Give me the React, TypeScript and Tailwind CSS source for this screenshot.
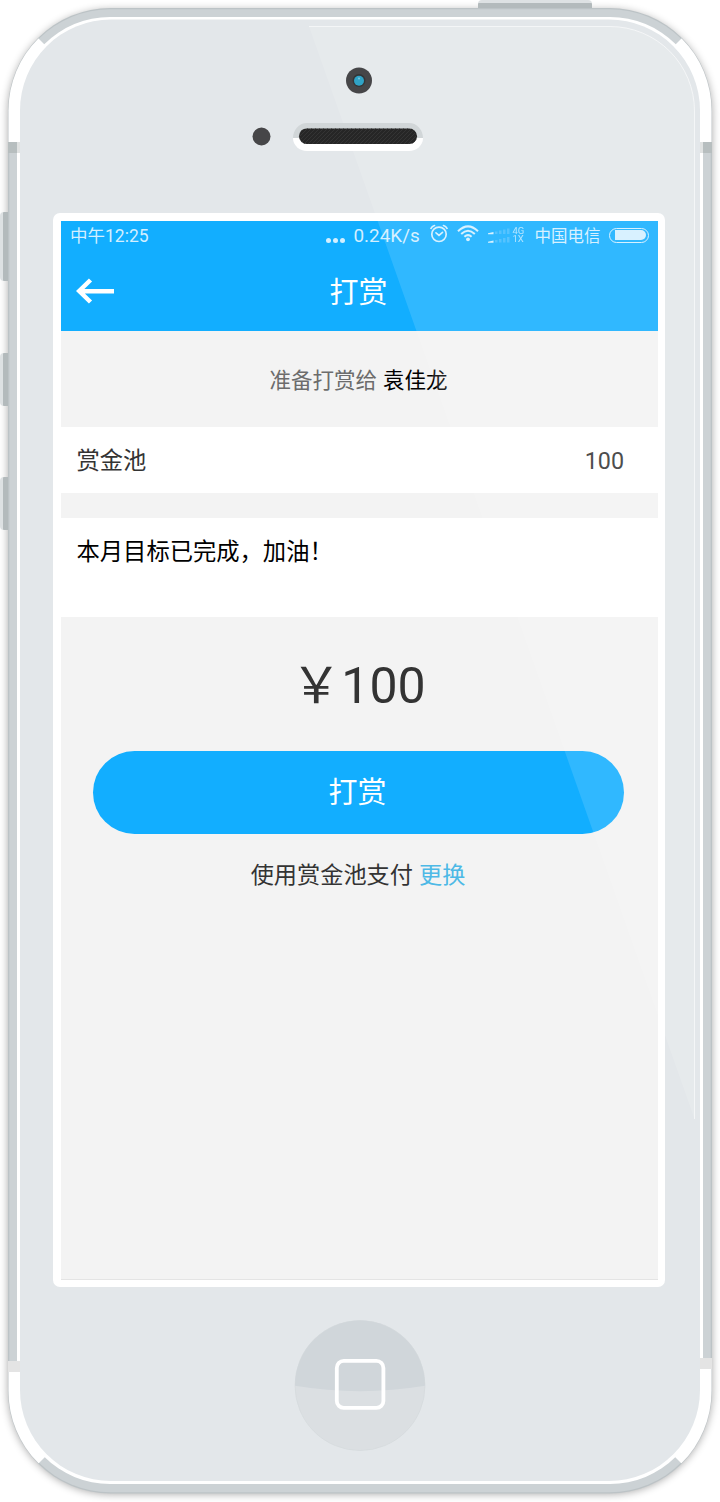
import React from 'react';

const sideButtons = [
  { y: 212, height: 69 },
  { y: 353, height: 53 },
  { y: 477, height: 53 },
];

const PhoneBody: React.FC = () => (
  <svg className="absolute inset-0" width="720" height="1502" viewBox="0 0 720 1502" aria-hidden="true">
    <defs>
      <filter id="bodyShadow" x="-5%" y="-5%" width="110%" height="110%">
        <feGaussianBlur stdDeviation="4.5" />
      </filter>
      <clipPath id="bodyClip">
        <rect x="8.5" y="8.5" width="703" height="1484.5" rx="102" />
      </clipPath>
      <clipPath id="homeClip">
        <circle cx="360" cy="1385.5" r="65" />
      </clipPath>
    </defs>

    {/* Body shadow and metal edge */}
    <rect x="8" y="10" width="704" height="1484" rx="103" fill="#000" opacity="0.34" filter="url(#bodyShadow)" />
    {sideButtons.map((b) => (
      <g key={b.y}>
        <rect x="0" y={b.y} width="10" height={b.height} rx="4" fill="#dde1e3" />
        <rect x="3" y={b.y} width="6" height={b.height} rx="1" fill="#b3babc" />
      </g>
    ))}
    <rect x="478" y="0" width="114" height="10" rx="4" fill="#dde1e3" />
    <rect x="478" y="3" width="114" height="6" rx="1" fill="#b3babc" />
    <rect x="8" y="8" width="704" height="1485.5" rx="102.5" fill="#bcc3c6" />
    <rect x="9.3" y="9.2" width="701.4" height="1483" rx="101" fill="#ccd2d5" />

    {/* Corner segments */}
    <g clipPath="url(#bodyClip)">
      <path d="M0 0L70 70V142H0ZM720 0L650 70V142H720Z" fill="#fff" />
      <path d="M0 1502L70 1432V1372H0ZM720 1502L650 1432V1369H720Z" fill="#fff" />
    </g>
    <rect x="17" y="17" width="686" height="1467" rx="93" fill="#fff" />
    <path d="M8 142H17V153H8ZM703 142H712V153H703Z" fill="#b7bebf" />
    <path d="M17 142H20V153H17ZM700 142H703V153H700Z" fill="#e0e2e2" />
    <path d="M8 1361H20V1372H8ZM700 1358H712V1369H700Z" fill="#e4e4e4" />
    <rect x="20" y="19.5" width="680" height="1461.5" rx="91" fill="#e3e7ea" />

    {/* Home button */}
    <circle cx="360" cy="1385.5" r="65" fill="#dbdfe2" stroke="#d5dadd" strokeWidth="0.8" />
    <path clipPath="url(#homeClip)" d="M290 1310H430V1385Q360 1397.5 290 1385Z" fill="#d0d6da" />
    <rect x="336.8" y="1360.9" width="46.6" height="47" rx="7" fill="none" stroke="#fff" strokeWidth="3.8" />
  </svg>
);

const Gloss: React.FC = () => (
  <svg className="pointer-events-none absolute inset-0" width="720" height="1502" viewBox="0 0 720 1502" aria-hidden="true">
    <defs>
      <pattern id="mesh" width="4" height="4" patternUnits="userSpaceOnUse">
        <path d="M0 4L4 0" stroke="#343434" strokeWidth="1" />
      </pattern>
    </defs>
    <path d="M309 26.5H610A84.5 84.5 0 0 1 694.5 111V1119Z" fill="#fff" fillOpacity="0.13" />
    <path d="M309 26.5H610A84.5 84.5 0 0 1 694.5 111V1119" fill="none" stroke="#fff" strokeOpacity="0.6" />

    {/* Camera, sensor and speaker */}
    <circle cx="359" cy="80.5" r="13" fill="#464648" />
    <circle cx="359" cy="80.5" r="6.5" fill="#333638" />
    <circle cx="359" cy="80.8" r="5" fill="#30a3c6" />
    <circle cx="359" cy="78.5" r="1" fill="#7cc6dc" />
    <circle cx="261.5" cy="136.5" r="9" fill="#464648" />
    <path d="M293 138A14 15 0 0 1 307 123H409A14 15 0 0 1 423 138Z" fill="#d1d6d8" />
    <path d="M293 138A14 13 0 0 0 307 151H409A14 13 0 0 0 423 138Z" fill="#fff" />
    <rect x="299" y="128.5" width="118" height="15.5" rx="7.75" fill="#262626" />
    <rect x="299" y="128.5" width="118" height="15.5" rx="7.75" fill="url(#mesh)" />
  </svg>
);

const AlarmIcon: React.FC = () => (
  <svg width="18" height="19" viewBox="0 0 18 19" fill="none" stroke="currentColor" strokeWidth="1.7" strokeLinecap="round">
    <circle cx="9" cy="10.3" r="7.2" />
    <path d="M1 4.3Q2 2.200 4.500 1.500M17 4.300Q16 2.200 13.500 1.500M6 8.800L9 11.300L12.500 8.300" />
  </svg>
);

const WifiIcon: React.FC = () => (
  <svg width="22" height="17" viewBox="0 0 22 17" fill="none" stroke="currentColor" strokeWidth="2">
    <path d="M1 6.200Q11 -3.500 21 6.200M4.200 9Q11 2.500 17.800 9M7.400 11.800Q11 8.500 14.600 11.800" />
    <circle cx="11" cy="14.300" r="1.900" fill="currentColor" stroke="none" />
  </svg>
);

const SignalIcon: React.FC = () => (
  <svg width="22" height="16" viewBox="0 0 22 16" fill="currentColor">
    {[0, 8.5].map((y) => (
      <g key={y}>
        <path d={`M0 ${y + 5.3}L5.5 ${y + 4}V${y + 6.3}H0Z`} />
        <path d={`M7 ${y + 3.5}h2.500v2.500h-2.500zM11 ${y + 2.5}h2.500v3.500h-2.500zM15 ${y + 1.5}h2.500v4.500h-2.500zM19 ${y + 0.5}h2.500v5.500h-2.500z`} opacity="0.22" />
      </g>
    ))}
  </svg>
);

const StatusBar: React.FC = () => (
  <div className="flex h-[30px] items-center pl-[9.500px] text-[#d3efff]">
    <span className="w-[255.500px] shrink-0 pt-0.5 text-[17.500px] leading-none whitespace-nowrap">中午12:25</span>
    <span className="flex w-[28px] shrink-0 gap-[2px] pt-2">
      <i className="size-[5px] rounded-full bg-current" />
      <i className="size-[5px] rounded-full bg-current" />
      <i className="size-[5px] rounded-full bg-current" />
    </span>
    <span className="w-[76px] shrink-0 text-[18.900px] leading-none whitespace-nowrap">0.24K/s</span>
    <span className="w-[27px] shrink-0 pb-1.5"><AlarmIcon /></span>
    <span className="w-[31px] shrink-0 pb-1.5"><WifiIcon /></span>
    <span className="w-[25px] shrink-0"><SignalIcon /></span>
    <span className="w-[22px] shrink-0 pb-0.5 text-[9.500px] leading-[8px] opacity-80">4G<br />1X</span>
    <span className="w-[74px] shrink-0 pt-0.5 text-[16.500px] leading-none whitespace-nowrap">中国电信</span>
    <span className="mb-0.5 flex h-[15px] w-[40px] shrink-0 items-center justify-end rounded-full border border-current pr-[2px]">
      <span className="h-[10px] w-[31px] rounded-r-full bg-current" />
    </span>
  </div>
);

const App: React.FC = () => {
  return (
    <div className="relative h-[1502px] w-[720px] overflow-hidden bg-white font-['Roboto','Noto_Sans_CJK_SC',sans-serif]">
      <PhoneBody />

      <div className="relative pt-[213px] pl-[53px]">
        <main className="h-[1074px] w-[612px] rounded-[7px] bg-white pt-2 pl-[7.500px]">
          <div className="flex h-[1058.500px] w-[597px] flex-col border-b border-[#e4e4e4] bg-[#f3f3f3]">
            <header className="h-[110px] shrink-0 bg-[#12aeff]">
              <StatusBar />
              <div className="relative flex h-20 items-center justify-center">
                <button className="absolute top-[27px] left-[15px] text-white" aria-label="返回">
                  <svg width="38" height="26" viewBox="0 0 38 26" fill="none" stroke="currentColor" strokeWidth="4.500">
                    <path d="M14.500 2L3.200 13L14.500 24M3 13.200H38" />
                  </svg>
                </button>
                <h1 className="pt-1 pr-px text-[29px] leading-none text-white">打赏</h1>
              </div>
            </header>

            <p className="flex h-24 shrink-0 items-center justify-center gap-[6px] pt-1 pr-px text-[21.500px] text-[#6c6c6c]">
              准备打赏给 <span className="text-black">袁佳龙</span>
            </p>

            <div className="flex h-[66px] shrink-0 items-center justify-between bg-white pt-0.5 pr-[33.500px] pl-4 text-[23.300px] text-[#333]">
              <span>赏金池</span>
              <span>100</span>
            </div>

            <div className="mt-[25px] h-[99px] shrink-0 bg-white pt-[17px] pl-4 text-[23.300px] leading-[35px] text-black">
              本月目标已完成，加油！
            </div>

            <div className="mt-[39px] flex h-[60px] items-center justify-center pr-px text-[50px] leading-none text-[#333]">￥100</div>

            <button className="mt-[34.500px] ml-8 h-[83px] w-[531px] shrink-0 rounded-full bg-[#12aeff] pt-1 pr-px text-[29px] text-white">
              打赏
            </button>

            <p className="mt-[24px] flex justify-center gap-[6px] pr-0.5 text-[23.200px] leading-[35px] text-[#333]">
              使用赏金池支付 <a className="text-[#4db9e6]">更换</a>
            </p>
          </div>
        </main>
      </div>

      <Gloss />
    </div>
  );
};

export default App;
